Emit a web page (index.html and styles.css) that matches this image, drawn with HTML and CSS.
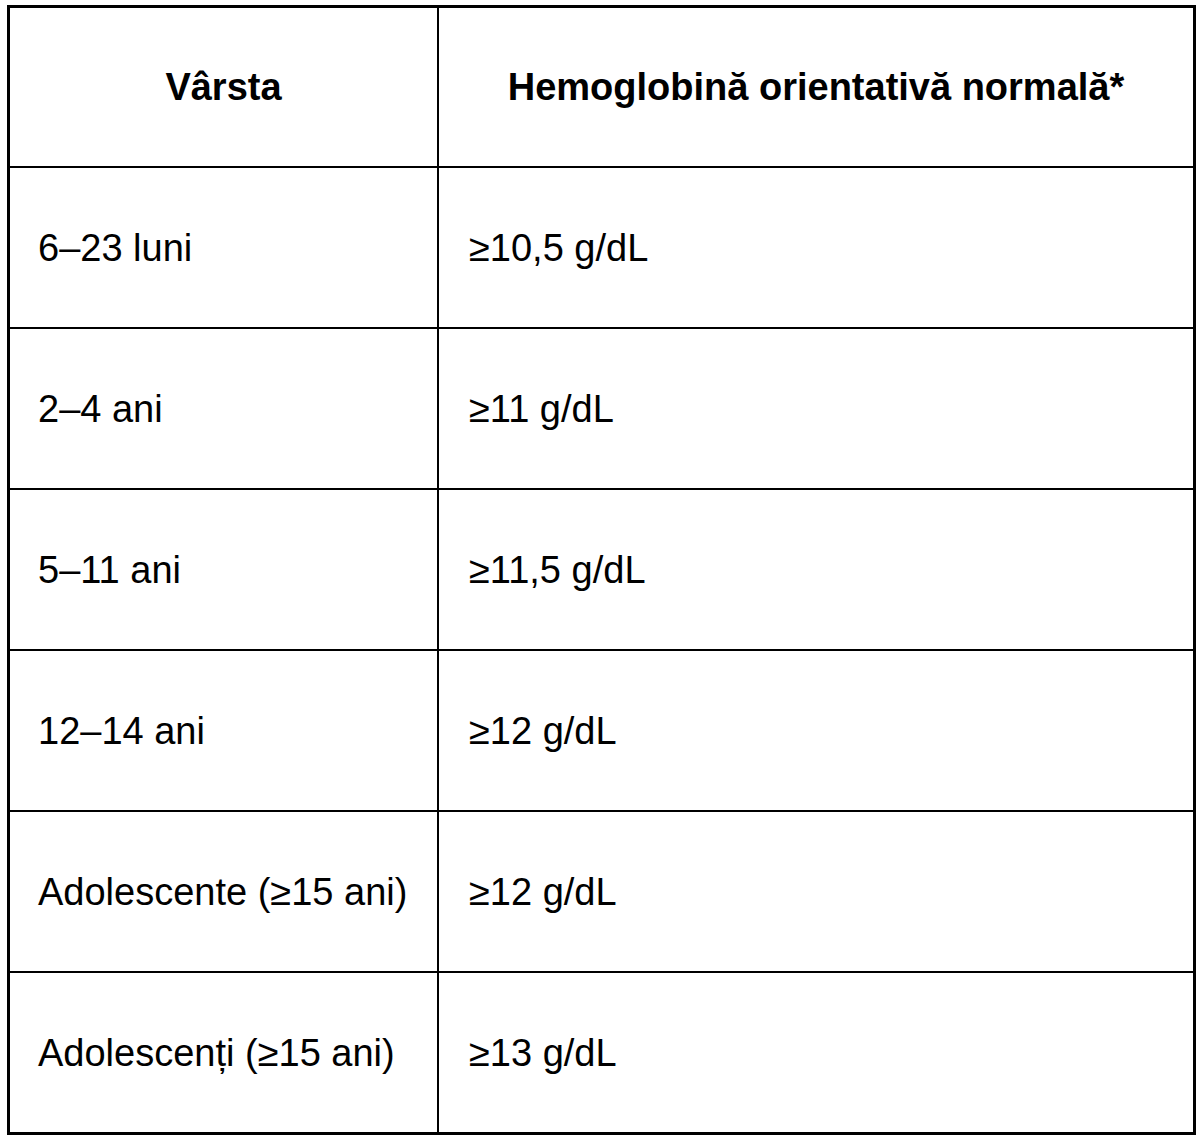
FILE: index.html
```html
<!DOCTYPE html>
<html lang="ro">
<head>
<meta charset="utf-8">
<title>Hemoglobină orientativă normală</title>
<link rel="stylesheet" href="styles.css">
</head>
<body>
<table class="hb-table">
  <colgroup>
    <col class="col-age">
    <col class="col-hb">
  </colgroup>
  <thead>
    <tr class="row-head">
      <th>Vârsta</th>
      <th>Hemoglobină orientativă normală*</th>
    </tr>
  </thead>
  <tbody>
    <tr><td>6–23 luni</td><td>≥10,5 g/dL</td></tr>
    <tr><td>2–4 ani</td><td>≥11 g/dL</td></tr>
    <tr><td>5–11 ani</td><td>≥11,5 g/dL</td></tr>
    <tr><td>12–14 ani</td><td>≥12 g/dL</td></tr>
    <tr><td>Adolescente (≥15 ani)</td><td>≥12 g/dL</td></tr>
    <tr class="row-last"><td>Adolescenți (≥15 ani)</td><td>≥13 g/dL</td></tr>
  </tbody>
</table>
</body>
</html>
```
FILE: styles.css
```css
html, body {
  margin: 0;
  padding: 0;
  background: #ffffff;
}

body {
  padding: 5px 0 0 7px;
  font-family: "Liberation Sans", Helvetica, Arial, sans-serif;
  color: #000000;
}

.hb-table {
  border-collapse: separate;
  border-spacing: 0;
  border: 3px solid #000000;
  table-layout: fixed;
  width: 1189px;
}

.col-age {
  width: 429px;
}

.col-hb {
  width: 754px;
}

.hb-table th,
.hb-table td {
  font-size: 38px;
  line-height: 44px;
  padding: 0;
  vertical-align: middle;
  border-right: 2px solid #000000;
  border-bottom: 2px solid #000000;
}

.hb-table th:last-child,
.hb-table td:last-child {
  border-right: none;
}

.hb-table th {
  font-weight: bold;
  text-align: center;
}

.hb-table td {
  font-weight: normal;
  text-align: left;
}

.hb-table td:first-child {
  padding-left: 28px;
}

.hb-table td:last-child {
  padding-left: 30px;
}

.row-head {
  height: 160px;
}

.hb-table tbody tr {
  height: 161px;
}

.hb-table tbody tr.row-last {
  height: 159px;
}

.row-last td {
  border-bottom: none;
}
```
